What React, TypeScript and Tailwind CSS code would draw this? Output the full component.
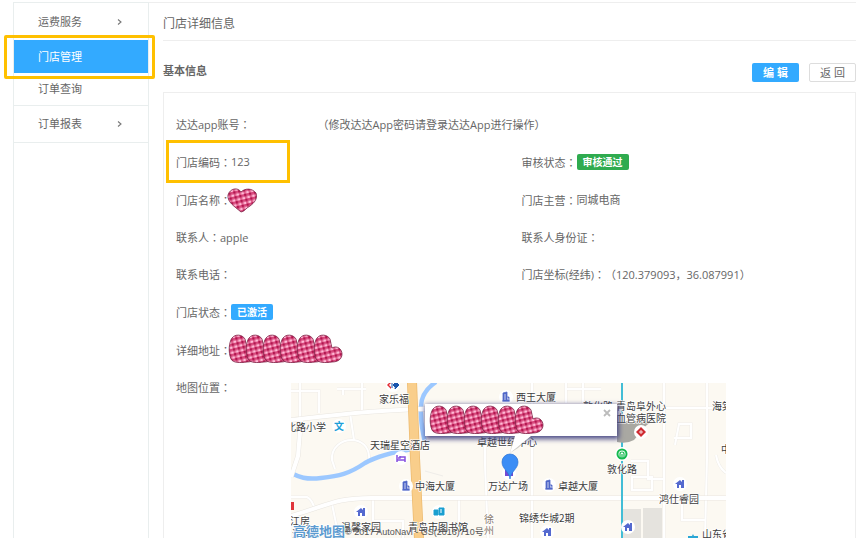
import type { ReactNode } from 'react'

const LEAN_HEART =
  'M2 25 C-1 18 0 8 3 4 C6 0 13 0 16 5 C17 8 17 11 18 14 C23 11 28 15 28 20 C28 25 24 28 18 28 C11 29 4 29 2 25Z'

function CheckPattern({ id }: { id: string }) {
  return (
    <defs>
      <pattern id={id} width="5" height="5" patternUnits="userSpaceOnUse" patternTransform="rotate(-14)">
        <rect width="5" height="5" fill="#e0628f" />
        <rect width="2.5" height="2.5" fill="#b3154f" />
        <rect x="2.5" y="2.5" width="2.5" height="2.5" fill="#ffb9d6" />
        <rect x="2.5" width="2.5" height="2.5" fill="#d8487c" />
      </pattern>
    </defs>
  )
}

function HeartStrip({ id, className = '' }: { id: string; className?: string }) {
  return (
    <svg width="115" height="30" viewBox="-1 -1 115 30" className={`block shrink-0 ${className}`}>
      <CheckPattern id={id} />
      {[0, 17, 34, 51, 68, 85].map((x) => (
        <g key={x} transform={`translate(${x} 0)`}>
          <path d={LEAN_HEART} fill={`url(#${id})`} stroke="#7c2346" strokeWidth="0.8" />
        </g>
      ))}
    </svg>
  )
}

function Heart() {
  return (
    <svg width="31" height="25" viewBox="0 0 31 25" className="-ml-1 block shrink-0">
      <CheckPattern id="heart-single" />
      <path
        d="M14 24 C7 18 0 14 1 7 C3 0 11 -1 14 4 C18 0 25 0 29 5 C31 11 27 15 23 18 C19 20 17 24 14 24Z"
        fill="url(#heart-single)"
        stroke="#7c2346"
        strokeWidth="0.8"
      />
    </svg>
  )
}

function Colon() {
  return <span className="font-['Noto_Sans_CJK_TC',sans-serif]">：</span>
}

function Field({ label, className = '', children }: { label: string; className?: string; children?: ReactNode }) {
  return (
    <div className={`relative flex items-center px-3 whitespace-nowrap ${className}`}>
      <span>
        {label}
        <Colon />
      </span>
      {children}
    </div>
  )
}

function Chevron() {
  return (
    <svg width="6" height="8" viewBox="0 0 6 8" fill="none" stroke="#777" strokeWidth="1.1">
      <path d="M1 1.5 L4 4 L1 6.5" />
    </svg>
  )
}

function Spot({ x, y, children }: { x: number; y: number; children: ReactNode }) {
  return (
    <g transform={`translate(${x} ${y})`}>
      <circle r="7" fill="#fff" />
      {children}
    </g>
  )
}

const towers = [
  [215, 14],
  [115, 103],
  [258, 102],
]

const houses = [
  [70, 129],
  [256, 149],
  [389, 101],
  [337, 144],
]

const places: [string, number, number][] = [
  ['家乐福', 88, 20],
  ['北路小学', -5, 48],
  ['天瑞星空酒店', 79, 66],
  ['西王大厦', 225, 18],
  ['卓越世纪中心', 186, 63],
  ['敦化路', 292, 27],
  ['青岛阜外心', 325, 27],
  ['血管病医院', 325, 39],
  ['海棠', 421, 27],
  ['中', 430, 70],
  ['敦化路', 316, 90],
  ['卓越大厦', 267, 107],
  ['中海大厦', 124, 107],
  ['万达广场', 197, 107],
  ['锦绣华城2期', 228, 139],
  ['鸿仕睿园', 368, 120],
  ['山东省', 411, 155],
  ['江房', -1, 142],
  ['酒店', 1, 155],
  ['温馨家园', 50, 148],
  ['青岛市图书馆', 117, 148],
]

function StoreMap() {
  return (
    <svg width="435" height="155" viewBox="0 0 435 155" className="block font-['Noto_Sans_CJK_SC',sans-serif]">
      <rect width="435" height="155" fill="#fcf9f2" />

      {/* minor roads */}
      <g fill="none" stroke="#efede9" strokeWidth="3">
        <path d="M9 0 V35 M0 8 H28 V30 M46 6 H75 M71 0 V28 M52 6 V12" />
        <path d="M59 30 L63 57 C50 56 40 65 41 77 L44 86 M63 57 C74 59 79 67 78 78" />
        <path d="M0 114 H16 Q22 117 24 128 M41 121 L48 155 M82 116 V138 M82 138 H112 V155" />
        <path d="M241 0 V155 M194 56 V82 L197 155 M168 116 V155 M275 0 V20 M275 6 H310" />
        <path d="M373 0 V155 M416 0 V75 L414 155 M292 0 V20 M373 25 H435 M384 62 L388 41 H400 V55 H383" />
        <path d="M340 78 H357 V96 H374 M341 94 H361 V107 H341 Z M391 118 V137 H414 M425 72 Q427 84 435 90" />
        <path d="M134 88 L152 93 M137 30 H200" strokeWidth="1" />
      </g>
      <g fill="none" stroke="#fff" strokeWidth="2">
        <path d="M9 0 V35 M0 8 H28 V30 M46 6 H75 M71 0 V28 M52 6 V12" />
        <path d="M59 30 L63 57 C50 56 40 65 41 77 L44 86 M63 57 C74 59 79 67 78 78" />
        <path d="M0 114 H16 Q22 117 24 128 M41 121 L48 155 M82 116 V138 M82 138 H112 V155" />
        <path d="M241 0 V155 M194 56 V82 L197 155 M168 116 V155 M275 0 V20 M275 6 H310" />
        <path d="M373 0 V155 M416 0 V75 L414 155 M292 0 V20 M373 25 H435 M384 62 L388 41 H400 V55 H383" />
        <path d="M340 78 H357 V96 H374 M341 94 H361 V107 H341 Z M391 118 V137 H414 M425 72 Q427 84 435 90" />
      </g>
      <path d="M332 126 H350 V155 H332Z M352 125 H371 V155 H352Z" fill="#e5e3de" />

      {/* river */}
      <path
        d="M145 -1 C136 5 130 12 130 24 C129 40 132 48 134 60 M122 66 C95 70 83 75 74 80 C58 91 48 93 30 95 C15 97 8 94 0 90"
        fill="none"
        stroke="#9cc8ff"
        strokeWidth="4.5"
      />

      {/* main roads */}
      <g fill="none">
        <path
          d="M0 37 C35 33 80 27 134 26 M10 37 L7 73 L0 94 M0 133 C38 122 45 115 80 115 H435"
          stroke="#e9e6e0"
          strokeWidth="5"
        />
        <path
          d="M0 37 C35 33 80 27 134 26 M10 37 L7 73 L0 94 M0 133 C38 122 45 115 80 115 H435"
          stroke="#fff"
          strokeWidth="4"
        />
        <path d="M121 -1 L124 75 L128 156" stroke="#edbb70" strokeWidth="10" />
        <path d="M121 -1 L124 75 L128 156" stroke="#f9ce8b" strokeWidth="8.5" />
        <path d="M331 0 V155" stroke="#42bdd6" strokeWidth="2" />
      </g>

      {/* popup shadow on the ground */}
      <path d="M326 38 H363 C352 42 350 50 343 57 Q336 61 326 59Z" fill="#a9a8a2" />

      {towers.map(([x, y]) => (
        <Spot key={x} x={x} y={y}>
          <path d="M-3 4 V-4 L1 -5 V0 H3 V4Z M-4 4 H4" fill="#5068c8" stroke="#5068c8" strokeWidth="0.8" />
          <path d="M-1 -3 V3 M1 1 H2 V3" stroke="#fff" strokeWidth="0.7" fill="none" />
        </Spot>
      ))}
      {houses.map(([x, y]) => (
        <Spot key={x} x={x} y={y}>
          <path d="M-5 0 L0 -4 L2 -2 V-4 H4 V4 H1 V1 H-1 V4 H-3 V0Z" fill="#5469cf" />
        </Spot>
      ))}
      <Spot x={102} y={2}>
        <path d="M-2 -4 L-6 0 L-2 4 V2 L-4 0 L-2 -2Z" fill="#e32b34" />
        <path d="M2 -4 L6 0 L2 4 Q3 2 1 1 Q-1 0 1 -1 Q3 -2 2 -4Z M-1 -3 V3" fill="#1955ad" stroke="#1955ad" />
      </Spot>
      <Spot x={48} y={43}>
        <text x="-5" y="4" fontSize="10" fontWeight="700" fill="#1c9fd8">
          文
        </text>
      </Spot>
      <Spot x={110} y={75}>
        <path d="M-4 -3 V4 M-4 2 H4 V4 M4 2 V-1 H-1 M-3 0 H-1 V-2" fill="none" stroke="#8750e0" strokeWidth="1.5" />
      </Spot>
      <Spot x={148} y={129}>
        <path d="M-5 -2 H-1 V3 H-5Z M0 -4 H5 V3 H0Z" fill="#1a9fd0" stroke="#1a9fd0" />
        <path d="M2 -3 V1" stroke="#fff" />
      </Spot>
      <Spot x={350} y={49}>
        <path d="M0 -5 L5 0 L0 5 L-5 0Z" fill="#cf2b32" />
        <path d="M-2 0 H2 M0 -2 V2" stroke="#fff" strokeWidth="0.8" />
      </Spot>
      <Spot x={331} y={71}>
        <circle r="4.5" fill="none" stroke="#16ba50" strokeWidth="2" />
        <path d="M-2 5 V0 Q-2 -2 0 -2 Q2 -2 2 0 V5 M0 0 V5" fill="none" stroke="#16ba50" strokeWidth="1.2" />
      </Spot>
      <Spot x={218} y={90}>
        <path d="M-4 -3 H4 V3 H-4Z" fill="#7549d2" />
      </Spot>
      <path d="M0 119 H3 V127 H0Z" fill="#e0353b" />
      <path d="M397 153 H401 L402 151 L403 153 H407 V155 H397Z" fill="#2aa6d5" />

      <g fontSize="10" fill="#3c3c3c" stroke="#fff" strokeWidth="1.5" strokeLinejoin="round" paintOrder="stroke">
        {places.map(([name, x, y]) => (
          <text key={`${name}-${x}`} x={x} y={y}>
            {name}
          </text>
        ))}
        <g fill="#87786a">
          <text x="193" y="140">
            徐
          </text>
          <text x="193" y="151">
            州
          </text>
        </g>
        <text x="54" y="152" fontSize="9" fill="#555" fontFamily="Liberation Sans, Noto Sans CJK SC, sans-serif" strokeWidth="0">
          © 2017 AutoNavi - GS(2016)710号
        </text>
        <text x="2" y="153" fontSize="13" fontWeight="700" fill="#5c9bd0">
          高德地图
        </text>
      </g>

      {/* marker */}
      <path d="M219 96 C218 88 211 86 211 79 A8 8 0 0 1 227 79 C227 86 220 88 219 96Z" fill="#3b8df5" stroke="#2a73d6" strokeWidth="0.7" />
    </svg>
  )
}

function MapPopup() {
  return (
    <div className="absolute top-[21px] left-[134px] flex h-8 w-48 bg-white pl-1 shadow-[1px_2px_5px_1px_#4b4b86]">
      <HeartStrip id="hearts-popup" />
      <button type="button" aria-label="关闭" className="absolute top-1 right-[5px] p-px">
        <svg width="8" height="8" viewBox="0 0 8 8" stroke="#bcbcbc" strokeWidth="1.8">
          <path d="M1 1 L7 7 M7 1 L1 7" />
        </svg>
      </button>
      <svg width="24" height="18" viewBox="0 0 24 18" className="absolute top-full left-[84px]">
        <path d="M5 0 L1 17 L9 12 L23 0Z" fill="#777" opacity="0.35" />
        <path d="M6 0 L1 17 L22 0Z" fill="#fff" />
      </svg>
    </div>
  )
}

export default function App() {
  return (
    <div className="flex bg-white pt-[2px] pr-[7px] pl-[13px] font-['Open_Sans','Noto_Sans_CJK_SC',sans-serif] text-[11px] leading-4 text-[#666]">
      {/* Sidebar */}
      <nav className="w-[136px] shrink-0 border-x border-t border-[#e9eeee]">
        <a href="#freight" className="flex h-[37px] items-center justify-between pr-[25px] pl-6">
          运费服务
          <Chevron />
        </a>
        <a href="#stores" className="relative flex h-[33px] items-center bg-[#33aaff] pl-6 text-white">
          门店管理
          <span className="absolute -top-[5px] -right-[7px] -bottom-[6px] -left-[10px] rounded-xs border-3 border-[#ffc000]" />
        </a>
        <a href="#orders" className="flex h-[33px] items-center border-b border-[#e9eeee] pl-6">
          订单查询
        </a>
        <a href="#reports" className="flex h-[37px] items-center justify-between border-b border-[#e9eeee] pr-[25px] pl-6">
          订单报表
          <Chevron />
        </a>
      </nav>

      <main className="min-w-0 flex-1 border-t border-[#eee] pl-[14px]">
        <h1 className="flex h-[38px] items-center border-b border-[#eee] pt-1 text-xs">门店详细信息</h1>

        <div className="flex h-[51px] items-center justify-between pt-2">
          <h2 className="font-bold">基本信息</h2>
          <div className="flex gap-[10px] pt-1">
            <button type="button" className="h-[19px] w-[47px] rounded-xs bg-[#33aaff] font-bold text-white">
              编 辑
            </button>
            <button type="button" className="h-[19px] w-[47px] rounded-xs border border-[#ddd]">
              返 回
            </button>
          </div>
        </div>

        <section className="border-x border-t border-[#eee] pt-[13px]">
          <div className="grid grid-cols-2">
            <Field label="达达app账号" className="col-span-2 h-[37px]">
              <span className="pl-[67px]">（修改达达App密码请登录达达App进行操作）</span>
            </Field>
            <Field label="门店编码" className="h-[38px]">
              123
              <span className="absolute -top-[3px] -bottom-[2px] left-[2px] w-[124px] border-3 border-[#ffc000]" />
            </Field>
            <Field label="审核状态" className="h-[38px]">
              <span className="rounded-xs bg-[#2fab4f] px-[6px] text-[10px] font-bold text-white">审核通过</span>
            </Field>
            <Field label="门店名称" className="h-[38px]">
              <Heart />
            </Field>
            <Field label="门店主营" className="h-[38px]">
              同城电商
            </Field>
            <Field label="联系人" className="h-[37px]">
              apple
            </Field>
            <Field label="联系人身份证" className="h-[37px]" />
            <Field label="联系电话" className="h-[37px]" />
            <Field label="门店坐标(经纬)" className="h-[37px]">
              （120.379093，36.087991）
            </Field>
            <Field label="门店状态" className="col-span-2 h-[38px]">
              <span className="rounded-xs bg-[#33aaff] px-[6px] text-[10px] font-bold text-white">已激活</span>
            </Field>
            <Field label="详细地址" className="col-span-2 h-[38px]">
              <HeartStrip id="hearts-address" className="-ml-[3px] mb-1" />
            </Field>
          </div>
          <div className="flex pl-3">
            <span className="w-[115px] shrink-0 pt-[10px]">
              地图位置
              <Colon />
            </span>
            <div className="relative mt-[14px] overflow-hidden">
              <StoreMap />
              <MapPopup />
            </div>
          </div>
        </section>
      </main>
    </div>
  )
}
